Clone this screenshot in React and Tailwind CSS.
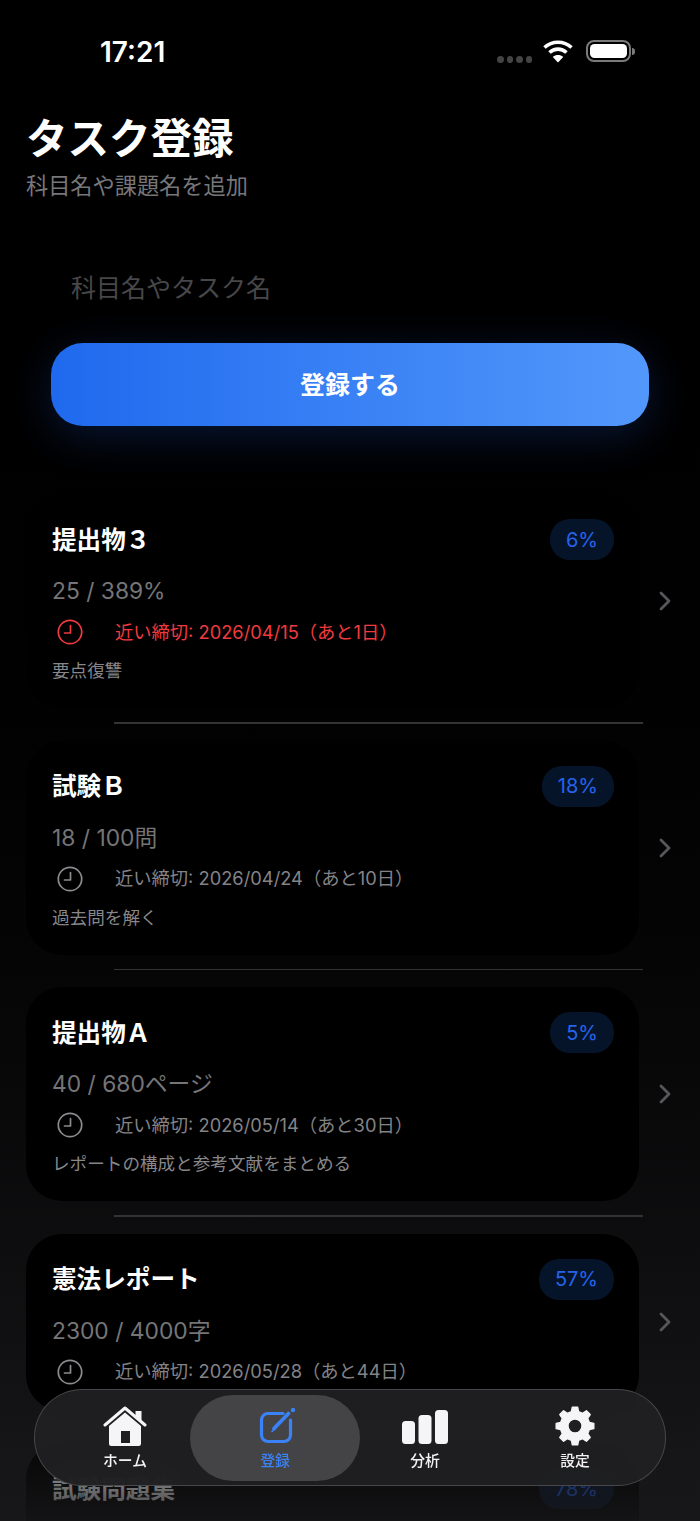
const gearPath = (() => {
  const cx = 20, cy = 20, teeth = 8, R = 19, r = 14.8;
  let d = '';
  for (let i = 0; i < teeth; i++) {
    const a = (i / teeth) * Math.PI * 2 - Math.PI / 2;
    const w = Math.PI / teeth;
    const pts = [
      [r, a - w * 0.62],
      [R, a - w * 0.36],
      [R, a + w * 0.36],
      [r, a + w * 0.62],
    ];
    pts.forEach(([rad, ang], j) => {
      const x = (cx + rad * Math.cos(ang)).toFixed(2);
      const y = (cy + rad * Math.sin(ang)).toFixed(2);
      d += (i === 0 && j === 0 ? 'M' : 'L') + x + ' ' + y + ' ';
    });
  }
  return d + 'Z M20 13 A7 7 0 1 0 20 27 A7 7 0 1 0 20 13 Z';
})();

function Clock({ color }) {
  return (
    <svg width="26" height="26" viewBox="0 0 26 26" fill="none" stroke={color} strokeWidth="1.7" strokeLinecap="round" strokeLinejoin="round" className="shrink-0">
      <circle cx="13" cy="13" r="11.7" />
      <path d="M13.5 6.5V14H7.5" />
    </svg>
  );
}

function Task({ title, pct, progress, deadline, note, urgent, last }) {
  return (
    <div className="shrink-0">
      <div className="flex items-center">
        <div className={`ml-[26px] w-[613px] shrink-0 rounded-[36px] bg-black pl-[26px] pr-[25px] pt-[25px] ${note ? 'h-[214px]' : 'h-[177px]'}`}>
          <div className="flex h-[41px] items-center justify-between">
            <div className="text-[24.6px] font-semibold leading-[30px] text-white">{title}</div>
            <div className="flex h-[41px] items-center rounded-[20px] bg-[#06142a] px-[16px] text-[20px] font-normal text-[#2563eb]">{pct}</div>
          </div>
          <div className="mt-[15px] h-[32px] text-[22.8px] leading-[32px] text-[#757578]">{progress}</div>
          {deadline && (
            <div className="mt-[9px] flex h-[32px] items-center pl-[5px]">
              <Clock color={urgent ? '#ef3a3f' : '#8c8c90'} />
              <div className={`ml-[32px] pt-[1px] text-[18.3px] ${urgent ? 'text-[#ef3a3f]' : 'text-[#838387]'}`}>{deadline}</div>
            </div>
          )}
          {note && <div className="mt-[11px] text-[17.6px] leading-[24px] text-[#87878b]">{note}</div>}
        </div>
        <svg width="14" height="22" viewBox="0 0 14 22" fill="none" stroke="#57575b" strokeWidth="2.8" strokeLinecap="round" strokeLinejoin="round" className="ml-[19px]">
          <path d="M3 3l8 8-8 8" />
        </svg>
      </div>
      {!last && <div className="ml-[114px] mb-[17px] mt-[14px] h-[1.5px] w-[529px] bg-[#333336]" />}
    </div>
  );
}

function NavItem({ label, active, children }) {
  return (
    <div className={`flex h-[86px] flex-col items-center justify-start pt-[10px] ${active ? '-mx-[10px] rounded-[43px] bg-[#444446]' : ''}`}>
      <div className="flex h-[42px] items-center justify-center">{children}</div>
      <div className={`mt-[4px] text-[14.8px] font-medium leading-[20px] ${active ? 'text-[#3b82f6]' : 'text-[#f2f2f4]'}`}>{label}</div>
    </div>
  );
}

export default function App() {
  return (
    <div className="relative h-[1521px] w-[700px] overflow-hidden bg-gradient-to-b from-black from-15% to-[#171719] font-['Inter','Noto_Sans_CJK_JP',sans-serif]">
      <div className="flex h-[104px] items-start justify-between pl-[100px] pr-[65px] pt-[35px]">
        <div className="text-[28px] font-semibold leading-[34px] text-white">17:21</div>
        <div className="flex items-start">
          <div className="mt-[21px] flex gap-[3px]">
            <span className="size-[6.5px] rounded-full bg-[#444]" />
            <span className="size-[6.5px] rounded-full bg-[#444]" />
            <span className="size-[6.5px] rounded-full bg-[#444]" />
            <span className="size-[6.5px] rounded-full bg-[#444]" />
          </div>
          <svg width="32" height="24" viewBox="0 0 32 24" fill="none" stroke="white" strokeWidth="3.6" className="ml-[10px] mt-[4px]">
            <path d="M2.5 8.5C10 1.5 22 1.5 29.5 8.5" />
            <path d="M7.5 13.5C12.5 9 19.5 9 24.5 13.5" />
            <path d="M16 23.5L10.8 18C13.8 15.4 18.2 15.4 21.2 18Z" fill="white" stroke="none" />
          </svg>
          <div className="ml-[12px] mt-[5px] flex items-center">
            <div className="h-[22px] w-[45px] rounded-[8px] border-[2px] border-[#7a7a7a] p-[2px]">
              <div className="h-full w-full rounded-[4.5px] bg-white" />
            </div>
            <div className="ml-[1px] h-[7px] w-[3px] rounded-r-full bg-[#7a7a7a]" />
          </div>
        </div>
      </div>

      <div className="pl-[26px]">
        <h1 className="mt-[3px] text-[41.5px] font-semibold leading-[64px] text-white">タスク登録</h1>
        <p className="-mt-[1px] text-[22.2px] leading-[32px] text-[#77777b]">科目名や課題名を追加</p>
      </div>

      <input
        placeholder="科目名やタスク名"
        className="mt-[55px] block h-[62px] w-full bg-transparent pl-[71px] text-[25px] text-white outline-none placeholder:text-[#47474a]"
      />

      <button className="mx-auto mt-[24px] block h-[83px] w-[598px] rounded-[32px] bg-gradient-to-r from-[#1f69ee] to-[#5298fb] pt-[2px] text-[25px] font-semibold text-white shadow-[0_10px_44px_rgba(37,99,235,0.22)]">
        登録する
      </button>

      <div className="mt-[68px] flex flex-col">
        <Task title="提出物３" pct="6%" progress="25 / 389%" deadline="近い締切: 2026/04/15（あと1日）" note="要点復讐" urgent />
        <Task title="試験Ｂ" pct="18%" progress="18 / 100問" deadline="近い締切: 2026/04/24（あと10日）" note="過去問を解く" />
        <Task title="提出物Ａ" pct="5%" progress="40 / 680ページ" deadline="近い締切: 2026/05/14（あと30日）" note="レポートの構成と参考文献をまとめる" />
        <Task title="憲法レポート" pct="57%" progress="2300 / 4000字" deadline="近い締切: 2026/05/28（あと44日）" />
        <Task title="試験問題集" pct="78%" last />
      </div>

      <div className="pointer-events-none absolute inset-x-0 bottom-0 h-[120px] bg-gradient-to-b from-transparent to-[#171719d9]" />

      <nav className="absolute bottom-[35px] left-[34px] h-[97px] w-[632px] rounded-[48px] border border-[#ffffff2e] bg-[#202022f0] px-[15px] pt-[5px] backdrop-blur-md">
        <div className="grid grid-cols-4">
          <NavItem label="ホーム">
            <svg width="44" height="40" viewBox="0 0 44 40" fill="none">
              <path d="M6 20L22 6.5L38 20V37.5a2.5 2.5 0 0 1-2.5 2.5h-27A2.5 2.5 0 0 1 6 37.5Z M18 25h9v12h-9Z" fill="#f5f5f7" fillRule="evenodd" />
              <path d="M2 19L22 2L42 19" stroke="#f5f5f7" strokeWidth="3" strokeLinecap="round" strokeLinejoin="round" />
              <path d="M32.5 5h6v11l-6-5Z" fill="#f5f5f7" />
            </svg>
          </NavItem>
          <NavItem label="登録" active>
            <svg width="42" height="40" viewBox="0 0 42 40" fill="none">
              <path d="M29 7.5H14a6.5 6.5 0 0 0-6.5 6.5v15a6.5 6.5 0 0 0 6.5 6.5h16a6.5 6.5 0 0 0 6.5-6.5V14" stroke="#3b82f6" strokeWidth="3.2" strokeLinecap="round" />
              <path d="M20 22.5L34.5 7.5" stroke="#3b82f6" strokeWidth="3.8" strokeLinecap="round" />
              <path d="M18 25.5L23.5 19L21 23Z" fill="#3b82f6" stroke="#3b82f6" strokeWidth="1.6" strokeLinejoin="round" />
              <circle cx="39" cy="4" r="2.2" fill="#3b82f6" />
            </svg>
          </NavItem>
          <NavItem label="分析">
            <svg width="48" height="36" viewBox="0 0 48 36" fill="#f5f5f7">
              <rect x="1" y="13" width="13" height="23" rx="3.5" />
              <rect x="17.5" y="7" width="13" height="29" rx="3.5" />
              <rect x="34" y="2" width="13" height="34" rx="3.5" />
            </svg>
          </NavItem>
          <NavItem label="設定">
            <svg width="40" height="40" viewBox="0 0 40 40">
              <path d={gearPath} fill="#f5f5f7" fillRule="evenodd" stroke="#f5f5f7" strokeWidth="1.4" strokeLinejoin="round" />
            </svg>
          </NavItem>
        </div>
      </nav>
    </div>
  );
}
